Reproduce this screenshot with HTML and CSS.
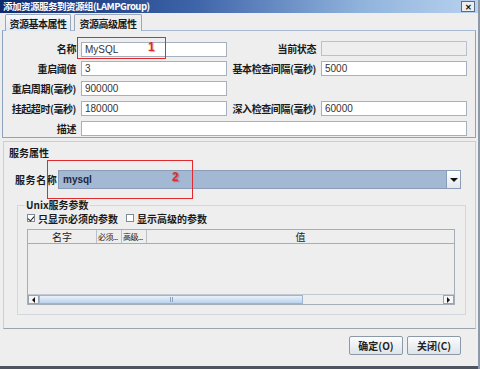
FILE: index.html
```html
<!DOCTYPE html>
<html lang="zh-CN">
<head>
<meta charset="UTF-8">
<title>添加资源服务到资源组</title>
<link rel="stylesheet" href="styles.css">
</head>
<body>
<div class="window">
  <div class="titlebar">
    <span class="title">添加资源服务到资源组(LAMPGroup)</span>
    <span class="close">✕</span>
  </div>

  <div class="tabs">
    <div class="tab active">资源基本属性</div>
    <div class="tab">资源高级属性</div>
  </div>

  <div class="tab-panel">
    <div class="form-grid">
      <label>名称</label>
      <div class="field-wrap">
        <input class="field" value="MySQL">
        <span class="mark mark-1"></span>
        <span class="num num-1">1</span>
      </div>
      <label>当前状态</label>
      <input class="field disabled" value="">

      <label>重启阈值</label>
      <input class="field" value="3">
      <label>基本检查间隔(毫秒)</label>
      <input class="field" value="5000">

      <label>重启周期(毫秒)</label>
      <input class="field" value="900000">
      <span></span><span></span>

      <label>挂起超时(毫秒)</label>
      <input class="field" value="180000">
      <label>深入检查间隔(毫秒)</label>
      <input class="field" value="60000">

      <label>描述</label>
      <input class="field wide" value="">
    </div>
  </div>

  <div class="section">
    <div class="section-title">服务属性</div>
    <div class="service-row">
      <span class="service-label">服务名称</span>
      <div class="combo">
        <span class="combo-text">mysql</span>
        <span class="combo-btn"><i></i></span>
      </div>
      <span class="mark mark-2"></span>
      <span class="num num-2">2</span>
    </div>

    <fieldset class="group">
      <legend>Unix服务参数</legend>
      <div class="checks">
        <span class="check"><i class="box on"></i>只显示必须的参数</span>
        <span class="check"><i class="box"></i>显示高级的参数</span>
      </div>
      <div class="table">
        <div class="thead">
          <span class="c-name">名字</span>
          <span class="c-req">必须...</span>
          <span class="c-adv">高级...</span>
          <span class="c-val">值</span>
        </div>
        <div class="tbody"></div>
        <div class="hscroll">
          <span class="arrow left"></span>
          <span class="thumb"><i></i></span>
          <span class="track"></span>
          <span class="arrow right"></span>
        </div>
      </div>
    </fieldset>
  </div>

  <div class="footer">
    <button>确定(O)</button>
    <button>关闭(C)</button>
  </div>
  <div class="bottom-edge"></div>
</div>
</body>
</html>
```

FILE: styles.css
```css
* { box-sizing: border-box; }
html, body { margin: 0; padding: 0; }
body { width: 480px; height: 369px; overflow: hidden; background: #eeeeee; font-family: "Noto Sans CJK SC", "Liberation Sans", sans-serif; font-size: 10px; color: #1a1a1a; }

.window { height: 369px; display: flex; flex-direction: column; border-right: 2px solid #8d99a8; }

.titlebar { height: 13px; flex-shrink: 0; display: flex; align-items: center; justify-content: space-between; padding: 0 3px; background: linear-gradient(to right, #0d2a6e 0%, #3d63a8 40%, #8fb2dc 75%, #b8d2ee 100%); }
.title { color: #fff; font-weight: bold; font-size: 9.5px; line-height: 13px; letter-spacing: -0.5px; white-space: nowrap; }
.close { width: 14px; height: 11px; display: flex; align-items: center; justify-content: center; background: #eeeeee; border: 1px solid #5d6b80; color: #111; font-size: 8px; font-weight: bold; line-height: 1; }

.tabs { height: 17px; flex-shrink: 0; display: flex; align-items: flex-end; padding-left: 5px; gap: 3px; }
.tab { height: 17px; width: 66px; display: flex; align-items: center; justify-content: center; white-space: nowrap; border: 1px solid #9aa8ba; border-bottom: none; border-radius: 2px 2px 0 0; font-weight: bold; letter-spacing: -0.5px; background: #eeeeee; position: relative; top: 1px; }
.tab.active { background: linear-gradient(#f6f9fc, #dfe9f4); }
.tab + .tab { width: 68px; }

.tab-panel { height: 108px; flex-shrink: 0; margin: 0 2px; border: 1px solid #8da2be; border-top-color: #a8bbd6; padding: 10px 0 0 1px; }
.form-grid { display: grid; grid-template-columns: 72px 146px 84px 146px; grid-auto-rows: 15px; column-gap: 5px; row-gap: 5px; }
.form-grid label { display: flex; align-items: center; justify-content: flex-end; font-weight: bold; white-space: nowrap; letter-spacing: -0.4px; }
.field { width: 100%; height: 15px; border: 1px solid #a7b1bd; background: #fff; padding: 0 3px; font-family: "Liberation Sans", sans-serif; font-size: 10px; color: #333; outline: none; }
.field.disabled { background: #eeeeee; border-color: #b9c2cc; }
.field.wide { grid-column: 2 / 5; }
.field-wrap { position: relative; }

.mark { position: absolute; border: 1.5px solid #e02a2e; }
.mark-1 { left: -4px; top: -4px; width: 89px; height: 22px; }
.num { position: absolute; color: #e02a2e; font-family: "Liberation Sans", sans-serif; font-weight: bold; font-size: 12px; text-shadow: 1px 1px 1px rgba(120, 0, 0, 0.35); }
.num-1 { left: 67px; top: -1px; }

.section { height: 188px; flex-shrink: 0; margin: 3px 2px 0 3px; border: 1px solid #c9cfd6; border-bottom-color: #9da3aa; padding: 4px 14px 0 11px; }
.section-title { height: 14px; line-height: 14px; font-weight: bold; margin-left: -6px; }
.service-row { position: relative; display: flex; align-items: center; margin-top: 10px; height: 19px; }
.service-label { width: 43px; font-weight: bold; letter-spacing: 0.6px; white-space: nowrap; }
.combo { flex: 1; height: 19px; display: flex; align-items: center; justify-content: space-between; background: #a3b8d2; border: 1px solid #8a9cb6; padding-left: 4px; }
.combo-text { font-family: "Liberation Sans", sans-serif; font-weight: bold; font-size: 10px; color: #1c2840; }
.combo-btn { width: 14px; height: 17px; display: flex; align-items: center; justify-content: center; background: linear-gradient(#ffffff, #e3e8ee); border-left: 1px solid #8a9cb6; }
.combo-btn i { width: 0; height: 0; border-left: 4px solid transparent; border-right: 4px solid transparent; border-top: 4px solid #111; }
.mark-2 { left: 32px; top: -10px; width: 146px; height: 39px; }
.num-2 { left: 157px; top: 0px; }

.group { margin: 11px 0 0 2px; height: 115px; border: 1px solid #d2d7dd; padding: 0 10px 0 9px; }
.group legend { padding: 0 1px; margin-left: -2px; font-weight: bold; line-height: 10px; }
.checks { display: flex; gap: 8px; height: 14px; align-items: center; margin-top: 1px; font-weight: bold; }
.check { display: flex; align-items: center; gap: 3px; }
.box { width: 8px; height: 8px; border: 1px solid #7f8a96; background: #fff; position: relative; display: block; }
.box.on::after { content: ""; position: absolute; left: 1px; top: 0px; width: 3px; height: 5px; border: solid #222; border-width: 0 1.5px 1.5px 0; transform: rotate(40deg); }

.table { margin-top: 4px; width: 428px; height: 76px; border: 1px solid #a6adb6; display: flex; flex-direction: column; }
.thead { height: 14px; display: flex; border-bottom: 1px solid #a6adb6; background: #eeeeee; }
.thead span { display: flex; align-items: center; justify-content: center; border-right: 1px solid #b9c0c8; white-space: nowrap; }
.c-name { width: 69px; }
.c-req, .c-adv { width: 25px; font-size: 8px; letter-spacing: -0.6px; justify-content: flex-start !important; padding-left: 1px; }
.c-val { flex: 1; border-right: none !important; }
.tbody { flex: 1; }
.hscroll { height: 10px; display: flex; border-top: 1px solid #c2c9d2; }
.arrow { width: 11px; border: 1px solid #9aa5b2; background: #f5f5f5; display: flex; align-items: center; justify-content: center; }
.arrow.left::after { content: ""; border-top: 3px solid transparent; border-bottom: 3px solid transparent; border-right: 3px solid #111; }
.arrow.right::after { content: ""; border-top: 3px solid transparent; border-bottom: 3px solid transparent; border-left: 3px solid #111; }
.thumb { width: 264px; background: linear-gradient(#e8f1fb, #bcd3ec); border: 1px solid #9db5d2; display: flex; align-items: center; justify-content: center; }
.thumb i { width: 3px; height: 5px; border-left: 1px solid #8ea3bd; border-right: 1px solid #8ea3bd; }
.track { flex: 1; background: #eeeeee; }

.footer { flex: 1; display: flex; justify-content: flex-end; align-items: flex-start; gap: 4px; padding: 7px 17px 0 0; }
.footer button { width: 54px; height: 19px; padding: 0; font-family: "Noto Sans CJK SC", sans-serif; font-size: 10px; font-weight: bold; color: #222; background: linear-gradient(#fbfcfd, #dfe4ea); border: 1px solid #8c99a9; border-radius: 2px; }
.bottom-edge { height: 3px; flex-shrink: 0; background: #4d5560; }
```
